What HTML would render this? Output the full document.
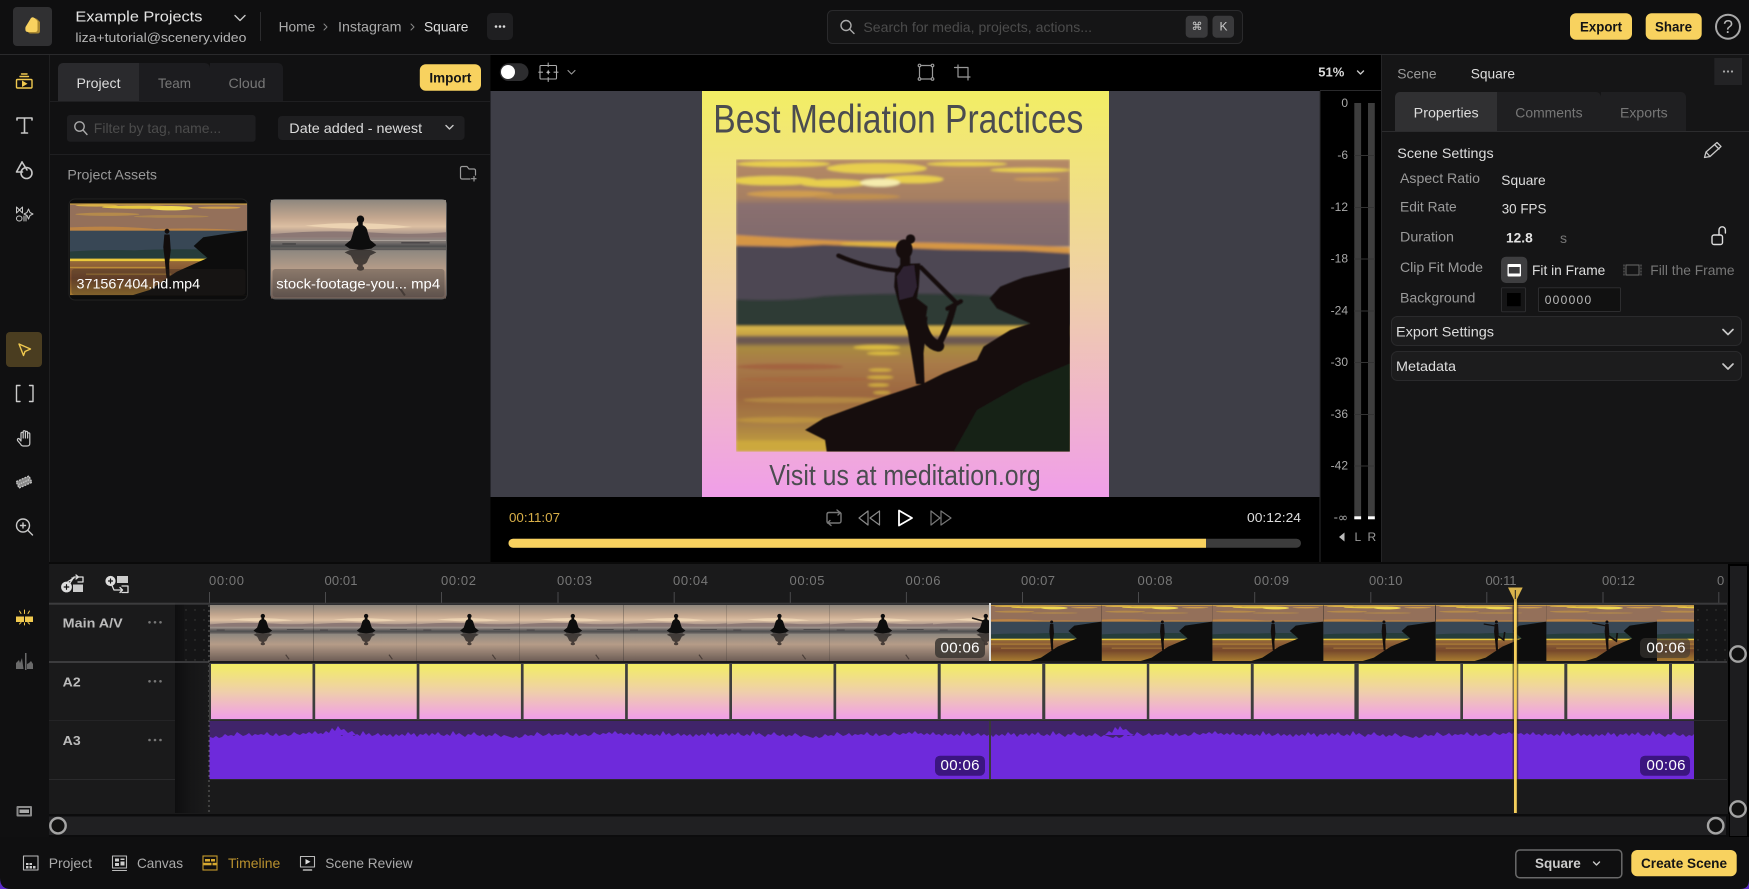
<!DOCTYPE html>
<html lang="en"><head><meta charset="utf-8"><title>Scenery</title>
<style>
html,body{margin:0;padding:0;background:#0f0f10;width:1749px;height:889px;overflow:hidden}
svg{display:block}
text{font-family:"Liberation Sans",sans-serif;dominant-baseline:central;font-size:14px;fill:#ddd}
.s13{font-size:13px}.s12{font-size:12px}.s15{font-size:15px}.b{font-weight:bold}
.g9{fill:#9a9a9a}.g7{fill:#777}.g5{fill:#4c4c4c}.ga{fill:#aaa}.gb{fill:#bbb}.d{fill:#141414}.w{fill:#fff}
.ic{fill:none;stroke:#c8c8c8;stroke-width:1.4;stroke-linecap:round;stroke-linejoin:round}
.y{stroke:#f0c94f}
</style></head><body>
<svg xmlns="http://www.w3.org/2000/svg" width="1749" height="889" viewBox="0 0 1749 889">
<defs>
<linearGradient id="gr" x1="0" y1="0" x2="0" y2="1"><stop offset="0" stop-color="#f2ee64"/><stop offset=".5" stop-color="#efcfaa"/><stop offset="1" stop-color="#f09ee9"/></linearGradient>
<linearGradient id="wat" x1="0" y1="0" x2="0" y2="1"><stop offset="0" stop-color="#d9b94a"/><stop offset=".07" stop-color="#c8a244"/><stop offset=".09" stop-color="#6f5a52"/><stop offset=".13" stop-color="#6a5650"/><stop offset=".17" stop-color="#a88a40"/><stop offset=".3" stop-color="#a87a48"/><stop offset=".55" stop-color="#9c6640"/><stop offset=".8" stop-color="#ab8244"/><stop offset="1" stop-color="#c9a63c"/></linearGradient>
<linearGradient id="sk" x1="0" y1="0" x2="0" y2="1"><stop offset="0" stop-color="#b58a66"/><stop offset=".45" stop-color="#a67f62"/><stop offset=".52" stop-color="#8a6f6f"/><stop offset="1" stop-color="#7f6a6c"/></linearGradient>
<linearGradient id="wat2" x1="0" y1="0" x2="0" y2="1"><stop offset="0" stop-color="#96683a"/><stop offset=".5" stop-color="#77492c"/><stop offset="1" stop-color="#a87c30"/></linearGradient>
<linearGradient id="bsky" x1="0" y1="0" x2="0" y2="1"><stop offset="0" stop-color="#8f877e"/><stop offset=".18" stop-color="#c4a78f"/><stop offset=".27" stop-color="#dcbfa2"/><stop offset=".37" stop-color="#9c8a84"/><stop offset=".43" stop-color="#77716e"/><stop offset=".47" stop-color="#4d4d4e"/><stop offset=".52" stop-color="#8f8880"/><stop offset=".7" stop-color="#b59c88"/><stop offset="1" stop-color="#6d5d56"/></linearGradient>
<linearGradient id="strip" x1="0" y1="0" x2="1" y2="0"><stop offset="0" stop-color="#0e0e0f"/><stop offset=".4" stop-color="#151516"/><stop offset="1" stop-color="#1a1a1b"/></linearGradient>
<filter id="bl" x="-2%" y="-2%" width="104%" height="104%"><feGaussianBlur stdDeviation="1.600"/></filter>
<filter id="blw" x="-5%" y="-5%" width="110%" height="110%"><feGaussianBlur stdDeviation="4"/></filter>
<filter id="bl2" x="-2%" y="-2%" width="104%" height="104%"><feGaussianBlur stdDeviation=".6"/></filter>
<pattern id="wave" patternUnits="userSpaceOnUse" x="210" y="721" width="300" height="58">
<rect width="300" height="58" fill="#40246a"/>
<path fill="#6e2adb" d="M0 16L3 17 6 15 9 17 12 16 15 13 18 15 21 14 24 15 27 11 30 13 33 15 36 14 39 12 42 15 45 13 48 14 51 13 54 14 57 11 60 14 63 15 66 12 69 15 72 14 75 13 78 15 81 14 84 11 87 13 90 14 93 12 96 13 99 11 102 13 105 10 108 13 111 12 114 14 117 12 120 14 123 11 126 14 129 13 132 15 135 12 138 14 141 13 144 15 147 13 150 15 153 10 156 14 159 12 162 15 165 14 168 12 171 15 174 13 177 15 180 13 183 16 186 13 189 15 192 13 195 15 198 11 201 14 204 12 207 16 210 13 213 14 216 12 219 15 222 12 225 14 228 11 231 14 234 15 237 13 240 15 243 10 246 14 249 12 252 14 255 16 258 13 261 14 264 11 267 14 270 15 273 13 276 16 279 14 282 15 285 12 288 14 291 16 294 14 297 15 300 16V58H0Z"/>
</pattern>
<pattern id="dots" patternUnits="userSpaceOnUse" x="184" y="608" width="9" height="10"><rect width="9" height="10" fill="#151516"/><circle cx="2" cy="2" r=".7" fill="#3c3c3c"/></pattern>

<symbol id="wide" viewBox="0 0 332 168" preserveAspectRatio="none"><g filter="url(#bl2)">
<rect width="332" height="52" fill="#94705a"/>
<rect y="0" width="332" height="2.500" fill="#c99e42"/>
<ellipse cx="130" cy="7" rx="70" ry="3" fill="#e8c840"/><ellipse cx="190" cy="9" rx="40" ry="4" fill="#f0d850"/><ellipse cx="50" cy="4" rx="40" ry="2" fill="#d8b048"/><ellipse cx="280" cy="8" rx="40" ry="2" fill="#d0a048"/>
<ellipse cx="70" cy="20" rx="60" ry="3" fill="#b58a4c"/><ellipse cx="190" cy="24" rx="70" ry="2.500" fill="#ab8450"/>
<path fill="#bc8444" d="M0 44Q80 40 160 47 250 44 332 50V53H0Z"/>
<rect y="50" width="332" height="52" fill="#394655"/>
<path d="M0 88Q60 84 120 86 200 82 332 86V102H0Z" fill="#253c3b"/>
<rect y="101" width="332" height="5" fill="#ecc93a"/>
<rect y="106" width="332" height="62" fill="url(#wat2)"/>
<rect y="116" width="180" height="2.500" fill="#d9aa3c" opacity=".6"/><rect x="30" y="128" width="160" height="3" fill="#d9aa3c" opacity=".45"/>
<path fill="#09100e" d="M117 168L150 158 200 125 258 100 232 78 250 62 332 50V168Z"/>
</g></symbol>

<g id="pStand"><g fill="#120d0c"><circle cx="182" cy="51" r="4.500"/><path d="M177 57L187 57 189 85 186 110 187 136 181 136 178 105 175 80Z"/></g></g>

<g id="med"><circle cx="158" cy="33" r="6.500"/><path d="M154 38H162V43C168 45 170 50 171 56L175 68 186 77 177 83 158 85 139 83 130 77 141 68 145 56C146 50 148 45 154 43Z"/></g>

<symbol id="beach" viewBox="0 0 309 168" preserveAspectRatio="none"><g filter="url(#bl2)">
<rect width="309" height="168" fill="url(#bsky)"/>
<path fill="#ecd3b2" d="M60 44Q150 34 250 46 160 54 60 44Z"/>
<path fill="#8c7874" d="M0 58Q100 50 190 56 250 60 309 55V64H0Z"/>
<rect y="68" width="309" height="1.500" fill="#d8d0c6" opacity=".6"/><rect y="83" width="309" height="2" fill="#35353a" opacity=".5"/>
<path fill="#3e3a3c" d="M20 74h24v2H20zM230 72h50v2h-50z"/>
<use href="#med" fill="#0d0b0b"/>
<g transform="matrix(1 0 0 -.62 0 137)" opacity=".75"><use href="#med" fill="#25201f"/></g>
<path fill="#4a3e38" d="M228 148l10 14-3 2-10-14Z"/>
</g></symbol>

<symbol id="yoga" viewBox="138 208 1001 877" preserveAspectRatio="none">
<g filter="url(#blw)">
<rect x="138" y="208" width="1001" height="262" fill="url(#sk)"/>
<g fill="#e8cf4e"><ellipse cx="280" cy="222" rx="140" ry="9"/><ellipse cx="560" cy="235" rx="150" ry="16"/><ellipse cx="830" cy="222" rx="120" ry="7"/><ellipse cx="1020" cy="240" rx="120" ry="7"/><ellipse cx="250" cy="272" rx="130" ry="14"/><ellipse cx="430" cy="280" rx="100" ry="12"/><ellipse cx="670" cy="268" rx="90" ry="12"/></g>
<ellipse cx="570" cy="278" rx="60" ry="12" fill="#f6ecae"/>
<ellipse cx="300" cy="312" rx="130" ry="10" fill="#cf9c50"/><ellipse cx="500" cy="320" rx="130" ry="9" fill="#c09050"/>
<ellipse cx="1040" cy="268" rx="70" ry="6" fill="#c79858"/>
<path fill="#d59645" d="M138 435Q400 452 560 456 800 458 1139 472V492Q900 488 700 480 400 472 138 466Z"/>
<ellipse cx="560" cy="462" rx="110" ry="7" fill="#e2b540"/>
<path fill="#4e4753" d="M138 468L300 470 400 464 560 470 760 478 1000 482 1139 490V640H138Z"/>
<path fill="#2e3b36" d="M138 628Q300 635 400 618 600 608 780 612 900 615 1139 630V708H138Z"/>
<rect x="138" y="708" width="1001" height="377" fill="url(#wat)"/>
<g fill="#dcbc40"><ellipse cx="560" cy="772" rx="70" ry="7"/><ellipse cx="580" cy="790" rx="50" ry="5"/><ellipse cx="570" cy="840" rx="35" ry="5" opacity=".8"/><ellipse cx="570" cy="862" rx="40" ry="5" opacity=".8"/><ellipse cx="565" cy="885" rx="32" ry="5" opacity=".8"/><ellipse cx="575" cy="908" rx="26" ry="5" opacity=".7"/></g>
<ellipse cx="300" cy="830" rx="160" ry="9" fill="#a0573a" opacity=".6"/><ellipse cx="350" cy="868" rx="200" ry="7" fill="#a85f3a" opacity=".5"/><ellipse cx="380" cy="930" rx="220" ry="9" fill="#c09a44" opacity=".6"/><ellipse cx="280" cy="990" rx="140" ry="9" fill="#c8a040" opacity=".6"/>
<rect x="138" y="1052" width="270" height="33" fill="#cca83e"/>
</g>
<g filter="url(#bl)">
<path fill="#15110e" d="M345 1020L400 985 550 930 640 900 700 880 760 850 860 810 880 770 960 720 1020 700 920 655 898 625 930 590 1000 562 1139 532V1085H410L405 1050Z"/>
<path fill="#18231a" d="M790 1085L860 960 1000 880 1139 820V1085Z" opacity=".85"/>
<g fill="#17110f">
<ellipse cx="642" cy="478" rx="25" ry="30"/><circle cx="661" cy="447" r="14"/>
<path d="M630 500H660V530H630Z"/>
<path d="M615 545L632 522 690 520 686 590 680 625 712 650 706 690 650 720 625 640 612 590Z"/>
<path d="M648 700L712 680 700 790 703 882 678 882 665 800Z"/>
</g>
<path fill="#2d2430" d="M620 560L640 530 672 525 680 590 668 620 628 630Z"/>
<g fill="none" stroke="#17110f" stroke-linecap="round">
<path d="M625 542Q530 535 445 497" stroke-width="13"/>
<path d="M692 532Q730 570 800 640" stroke-width="13"/>
<path d="M690 685Q705 760 745 768" stroke-width="34"/>
<path d="M745 765Q775 710 790 650" stroke-width="19"/>
<path d="M772 656L812 634" stroke-width="13"/>
</g></g>
</symbol>
</defs>

<!-- base -->
<rect width="1749" height="889" fill="#0f0f10"/>
<path d="M0 878Q0 889 11 889H0Z" fill="#5b2bc9"/><path d="M1749 880Q1749 889 1740 889H1749Z" fill="#5b2bc9"/>
<rect y="54" width="1749" height="1" fill="#2a2a2c"/>

<!-- top bar -->
<rect x="13" y="7" width="39" height="39" rx="4" fill="#303032"/>
<path d="M28 28L33 19Q35 17.500 37 19L40 22V31Q40 33.500 37.500 33.500H30Q27 33 28 28Z" fill="#a98832"/>
<path d="M25.500 27L31 18Q32.500 16.500 34.500 18L37.500 21V29.500Q37.500 32 35 32H28Q24.500 32 25.500 27Z" fill="#f8d25f"/>
<text x="75.400" y="17" class="s15" textLength="127" lengthAdjust="spacingAndGlyphs" style="fill:#e4e4e4">Example Projects</text>
<text x="75.400" y="37.700" class="s13" textLength="171" lengthAdjust="spacingAndGlyphs" style="fill:#b5b5b5">liza+tutorial@scenery.video</text>
<path class="ic" d="M235 15.500L240 20.500 245 15.500"/>
<rect x="260" y="12" width="1" height="29" fill="#2c2c2e"/>
<text x="278.600" y="26.700" textLength="36.700" lengthAdjust="spacingAndGlyphs" class="ga">Home</text>
<path class="ic" style="stroke:#888;stroke-width:1" d="M324 24L327 27 324 30"/>
<text x="338" y="26.700" textLength="63.500" lengthAdjust="spacingAndGlyphs" class="ga">Instagram</text>
<path class="ic" style="stroke:#888;stroke-width:1" d="M411 24L414 27 411 30"/>
<text x="424" y="26.700" textLength="44.400" lengthAdjust="spacingAndGlyphs">Square</text>
<rect x="487" y="13" width="26" height="27" rx="5" fill="#1f1f21"/>
<g fill="#ddd"><circle cx="496" cy="26.500" r="1.300"/><circle cx="500" cy="26.500" r="1.300"/><circle cx="504" cy="26.500" r="1.300"/></g>

<rect x="827.500" y="10.500" width="415" height="33" rx="5" fill="#151516" stroke="#2a2a2c"/>
<circle cx="846" cy="25.500" r="5" class="ic" style="stroke:#aaa"/><path class="ic" style="stroke:#aaa" d="M849.500 29L854 33.500"/>
<text x="863.400" y="27" textLength="228.600" lengthAdjust="spacingAndGlyphs" class="g5">Search for media, projects, actions...</text>
<rect x="1185.700" y="15.700" width="22" height="22" rx="4" fill="#3a3a3c"/><rect x="1212.500" y="15.700" width="21.500" height="22" rx="4" fill="#3a3a3c"/>
<text x="1191.500" y="26.700" class="s12" style="font-family:'DejaVu Sans',sans-serif;font-size:11px;fill:#ccc">⌘</text>
<text x="1219.500" y="26.700" class="s12" style="fill:#ccc">K</text>

<rect x="1570" y="13.300" width="62" height="26.400" rx="6" fill="#f8d25f"/>
<text x="1580" y="26.700" textLength="42" lengthAdjust="spacingAndGlyphs" class="b d">Export</text>
<rect x="1645.700" y="13.300" width="56" height="26.400" rx="6" fill="#f8d25f"/>
<text x="1655" y="26.700" textLength="37" lengthAdjust="spacingAndGlyphs" class="b d">Share</text>
<circle cx="1728" cy="26.700" r="12" fill="none" stroke="#a8a8a8" stroke-width="2"/>
<text x="1728" y="27" text-anchor="middle" style="font-size:18px;fill:#b8b8b8">?</text>

<!-- left rail -->
<rect y="55" width="49" height="782" fill="#101011"/>
<rect x="49" y="55" width="1" height="782" fill="#1f1f20"/>
<g class="ic y"><rect x="16.500" y="79.500" width="15.500" height="8.500" rx="1"/><path d="M20 76.500H28.500M21.500 74H27"/></g><path d="M22 80.500L27.500 83.800 22 87Z" fill="#f0c94f"/>
<g class="ic" style="stroke-width:1.600"><path d="M17 120V118H32V120M24.500 118V133M21.500 133H27.500"/></g>
<g class="ic" style="stroke-width:1.600"><path d="M22 162L16.500 172H22.500"/><path d="M22 162L27 170"/><circle cx="26.500" cy="173" r="5.500"/></g>
<g class="ic" style="stroke-width:1"><path d="M16.500 207V213L22.500 207V213ZM16.500 207L19.500 210"/><rect x="16.500" y="216" width="5.500" height="5" rx="2.500"/><path d="M24 216V221M26 216V221"/><path d="M28.500 209L30 212.500 33 214 30 215.500 28.500 219 27 215.500 24 214 27 212.500Z"/></g>
<rect x="6" y="332" width="36" height="35" rx="4" fill="#4a3d20"/>
<path class="ic y" d="M19 344L30.500 349 25 351.500 23.500 355.500Z"/>
<g class="ic" style="stroke:#ccc"><path d="M20 385.500H16.500V401.500H20M29.500 385.500H33V401.500H29.500"/></g>
<g class="ic" style="stroke-width:1.200"><path d="M21 441V433.500a1.100 1.100 0 0 1 2.200 0V438M23.200 438V431.800a1.100 1.100 0 0 1 2.200 0V438M25.400 438V432.500a1.100 1.100 0 0 1 2.200 0V438M27.600 438V434a1.100 1.100 0 0 1 2.200 0V443Q30 446 27 446H23Q21.500 446 20.500 444L17.500 440.500Q17 438.500 19 438.500L21 441"/></g>
<g transform="rotate(-24 24 482)"><rect x="17" y="478.500" width="14" height="7" fill="#8a8a8a"/><rect x="17" y="478.500" width="14" height="7" fill="none" stroke="#c8c8c8" stroke-width="1.300" stroke-dasharray="2 1"/><path d="M18 482H30" stroke="#d8d8d8" stroke-width="1" stroke-dasharray="1.500 1"/></g>
<g class="ic" style="stroke-width:1.400"><circle cx="23" cy="525.500" r="6.500"/><path d="M28 530.500L32.500 535M20.500 525.500H25.500M23 523V528"/></g>

<path d="M16 616.500H33V622H16Z" fill="#f0c94f"/><path class="ic y" style="stroke-width:1" d="M24.500 610V613.500M19.500 611L21 613.500M29.500 611L28 613.500M24.500 625V622.500M19.500 624L21 622.500M29.500 624L28 622.500"/><rect x="24" y="616" width="1" height="6.500" fill="#101011"/>
<path d="M16 669V663L19 660 20 663 22 658 23.500 669ZM27 669V664L29 663 31 661 33 664V669Z" fill="#6a6a6a"/><rect x="25" y="653" width="1.500" height="17" fill="#6a6a6a"/>
<rect x="16.500" y="806" width="15.500" height="10.500" rx="1" fill="#8a8a8a"/><rect x="18.500" y="808" width="11.500" height="6.500" fill="#101011"/><rect x="19.500" y="809.500" width="9.500" height="3.500" fill="#aaa"/>

<!-- project panel -->
<rect x="50" y="55" width="440" height="508" fill="#111112"/>
<path d="M58 102V68a5 5 0 0 1 5-5H139V102Z" fill="#2a2a2d"/>
<path d="M139 102V63H205a5 5 0 0 1 5 5V102Z" fill="#1c1c1f"/>
<path d="M210 102V63H278a5 5 0 0 1 5 5V102Z" fill="#1c1c1f"/>
<rect x="50" y="101" width="440" height="1" fill="#1f1f21"/>
<text x="76.500" y="83" textLength="44" lengthAdjust="spacingAndGlyphs">Project</text>
<text x="158" y="83" textLength="33" lengthAdjust="spacingAndGlyphs" class="g7">Team</text>
<text x="228.500" y="83" textLength="37" lengthAdjust="spacingAndGlyphs" class="g7">Cloud</text>
<rect x="419.800" y="64.300" width="61.200" height="26.400" rx="6" fill="#f8d25f"/>
<text x="429.400" y="77.500" textLength="42" lengthAdjust="spacingAndGlyphs" class="b d">Import</text>
<rect x="67" y="115" width="188.600" height="26.700" rx="3" fill="#1e1e20"/>
<circle cx="79.500" cy="126.500" r="4.700" class="ic" style="stroke:#aaa"/><path class="ic" style="stroke:#aaa" d="M83 130L87 134.500"/>
<text x="93.800" y="128" textLength="127.400" lengthAdjust="spacingAndGlyphs" class="g5">Filter by tag, name...</text>
<rect x="278" y="116" width="186.600" height="24" rx="4" fill="#1e1e20"/>
<text x="289.300" y="128" textLength="132.800" lengthAdjust="spacingAndGlyphs">Date added - newest</text>
<path class="ic" d="M446 125.500L449.500 129 453 125.500"/>
<rect x="50" y="154" width="440" height="1" fill="#1f1f21"/>
<text x="67.400" y="174.500" textLength="89.600" lengthAdjust="spacingAndGlyphs" class="g9">Project Assets</text>
<path class="ic" style="stroke:#999;stroke-width:1.200" d="M470 179H462a1.500 1.500 0 0 1-1.500-1.500V168a1.500 1.500 0 0 1 1.500-1.500H467L469 169H474a1.500 1.500 0 0 1 1.500 1.500V175M474 176.500V181M471.500 178.700H476"/>

<rect x="69" y="199" width="178.500" height="101" rx="6" fill="#0c0c0c" stroke="#222"/>
<svg x="70" y="203.300" width="177" height="92" overflow="hidden"><use href="#wide" width="177" height="92"/><use href="#pStand" transform="scale(.533,.548)"/></svg>
<rect x="71.500" y="269" width="174" height="26" rx="3" fill="#2a2622" opacity=".3"/>
<text x="76.500" y="283.500" textLength="123.600" lengthAdjust="spacingAndGlyphs" class="w">371567404.hd.mp4</text>
<rect x="270.500" y="199.500" width="176" height="99.500" rx="5" fill="none" stroke="#555" stroke-width="1"/>
<svg x="271" y="200" width="175" height="98.500"><use href="#beach" width="175" height="98.500"/></svg>
<rect x="272.500" y="269" width="172" height="28" rx="3" fill="#3e3a36" opacity=".35"/>
<text x="276.300" y="283.500" textLength="163.800" lengthAdjust="spacingAndGlyphs" class="w">stock-footage-you... mp4</text>

<!-- preview -->
<rect x="490.500" y="55" width="830" height="36" fill="#000"/>
<rect x="490.500" y="91" width="829" height="406" fill="#3e3e47"/>
<rect x="490.500" y="497" width="829" height="66" fill="#000"/>
<rect x="499.800" y="63.300" width="28.700" height="17.700" rx="8.800" fill="#2d2d2f"/><circle cx="508" cy="72" r="7" fill="#fff"/>
<g class="ic" style="stroke:#aaa;stroke-width:1.100"><rect x="540" y="65.500" width="16.500" height="13.500" rx="1"/><path d="M548.200 63V66.500M548.200 77.500V81.500M538.800 72.200H542.500M554 72.200H558"/></g><path d="M548.200 69.500L549 71.500 550.500 72.200 549 73 548.200 75 547.400 73 546 72.200 547.400 71.500Z" fill="#bbb"/>
<path class="ic" style="stroke:#999;stroke-width:1.100" d="M568 70.500L571.500 74 575 70.500"/>
<g class="ic" style="stroke:#999;stroke-width:1.200"><rect x="919.500" y="65.500" width="13" height="13.500"/><g fill="#000"><circle cx="919.500" cy="65.500" r="1.300"/><circle cx="932.500" cy="65.500" r="1.300"/><circle cx="919.500" cy="79" r="1.300"/><circle cx="932.500" cy="79" r="1.300"/></g></g>
<path class="ic" style="stroke:#999;stroke-width:1.200" d="M954.500 67.500H968V80M958 65V77H970"/>

<rect x="702" y="91" width="407" height="406" fill="url(#gr)"/>
<text x="713.300" y="119.500" textLength="370" lengthAdjust="spacingAndGlyphs" style="font-size:40px;fill:#4b4c50">Best Mediation Practices</text>
<use href="#yoga" x="736" y="159.300" width="334" height="292.400"/>
<text x="769.300" y="476" textLength="271.400" lengthAdjust="spacingAndGlyphs" style="font-size:29px;fill:#4b4c50">Visit us at meditation.org</text>

<text x="509" y="517.700" textLength="51" lengthAdjust="spacingAndGlyphs" class="s13" style="fill:#d8af48">00:11:07</text>
<text x="1247" y="517.700" textLength="54" lengthAdjust="spacingAndGlyphs" class="s13">00:12:24</text>
<g class="ic" style="stroke:#777"><path d="M827 522V514.500Q827 512.500 829 512.500H840L837 510M840.500 512.500L838 515M841 513.500V521Q841 523 839 523H828L831 525.500M827.500 523L830 520.500"/></g>
<path class="ic" style="stroke:#8a8a8a;stroke-width:1.200" d="M868 511L859 518 868 525ZM879.500 511L870 518 879.500 525Z"/>
<path class="ic" style="stroke:#fff;stroke-width:1.800" d="M899 510.500L912 518 899 525.500Z"/>
<path class="ic" style="stroke:#777;stroke-width:1.200" d="M931 511L940 518 931 525ZM941 511L951 518 941 525Z"/>
<rect x="508.400" y="538.700" width="792.600" height="9" rx="4.500" fill="#3c3c3c"/>
<path d="M1206 538.700H513a4.500 4.500 0 0 0 0 9H1206Z" fill="#f9d25f"/>

<!-- meter -->
<rect x="1320" y="55" width="61" height="508" fill="#000"/>
<rect x="1319.500" y="91" width="1" height="472" fill="#2a2a2c"/>
<rect x="1320" y="90" width="61" height="1" fill="#2a2a2c"/>
<text x="1318.300" y="72" class="s13 b">51%</text>
<path class="ic" d="M1357.500 71L1360.500 74 1363.500 71"/>
<rect x="1354.300" y="103" width="6.800" height="416" fill="#3d3d3d"/><rect x="1368" y="103" width="6.800" height="416" fill="#3d3d3d"/>
<g fill="#333"><rect x="1354" y="155" width="21" height="1"/><rect x="1354" y="207" width="21" height="1"/><rect x="1354" y="258.500" width="21" height="1"/><rect x="1354" y="310.500" width="21" height="1"/><rect x="1354" y="362" width="21" height="1"/><rect x="1354" y="414" width="21" height="1"/><rect x="1354" y="465.500" width="21" height="1"/></g>
<rect x="1354.300" y="516.300" width="6.800" height="3" fill="#fff"/><rect x="1368" y="516.300" width="6.800" height="3" fill="#fff"/>
<text x="1348" y="103" text-anchor="end" class="s12 ga">0</text>
<text x="1348" y="155" text-anchor="end" class="s12 ga">-6</text>
<text x="1348" y="207" text-anchor="end" class="s12 ga">-12</text>
<text x="1348" y="258.700" text-anchor="end" class="s12 ga">-18</text>
<text x="1348" y="310.700" text-anchor="end" class="s12 ga">-24</text>
<text x="1348" y="362" text-anchor="end" class="s12 ga">-30</text>
<text x="1348" y="414" text-anchor="end" class="s12 ga">-36</text>
<text x="1348" y="465.700" text-anchor="end" class="s12 ga">-42</text>
<text x="1348" y="517.700" text-anchor="end" class="ga" style="font-family:'DejaVu Sans',sans-serif;font-size:12px">-∞</text>
<path d="M1344.500 532.500V541.500L1339 537Z" fill="#bbb"/>
<text x="1354.500" y="537" class="s12 g9">L</text><text x="1367.500" y="537" class="s12 g9">R</text>

<!-- right panel -->
<rect x="1381" y="55" width="368" height="508" fill="#151516"/>
<rect x="1381" y="55" width="1" height="508" fill="#242426"/>
<text x="1397.300" y="73.300" textLength="39.300" lengthAdjust="spacingAndGlyphs" class="g9">Scene</text>
<text x="1470.700" y="73.300" textLength="44.300" lengthAdjust="spacingAndGlyphs">Square</text>
<rect x="1714.300" y="58" width="27.700" height="27" fill="#232325"/>
<g fill="#aaa"><circle cx="1724" cy="71.500" r="1.100"/><circle cx="1728" cy="71.500" r="1.100"/><circle cx="1732" cy="71.500" r="1.100"/></g>
<path d="M1395 131V97a5 5 0 0 1 5-5H1497V131Z" fill="#303032"/>
<path d="M1497 131V92H1596a5 5 0 0 1 5 5V131Z" fill="#1f1f21"/>
<path d="M1601 131V92H1681a5 5 0 0 1 5 5V131Z" fill="#1f1f21"/>
<rect x="1382" y="131" width="367" height="1" fill="#2c2c2e"/>
<text x="1413.700" y="112.300" textLength="65" lengthAdjust="spacingAndGlyphs">Properties</text>
<text x="1515.300" y="112.300" textLength="67.300" lengthAdjust="spacingAndGlyphs" class="g7">Comments</text>
<text x="1620" y="112.300" textLength="47.700" lengthAdjust="spacingAndGlyphs" class="g7">Exports</text>
<text x="1397.300" y="153" textLength="96.300" lengthAdjust="spacingAndGlyphs">Scene Settings</text>
<path class="ic" style="stroke-width:1.300" d="M1704.500 157.500L1706 152 1717 142.500 1721 146.500 1710 156.500ZM1714.500 144.500L1719 149M1706 152L1710 156.500"/>
<text x="1400" y="178" textLength="80" lengthAdjust="spacingAndGlyphs" class="g9">Aspect Ratio</text>
<text x="1400" y="206.500" textLength="56.700" lengthAdjust="spacingAndGlyphs" class="g9">Edit Rate</text>
<text x="1400" y="236.700" textLength="54" lengthAdjust="spacingAndGlyphs" class="g9">Duration</text>
<text x="1400" y="267" textLength="83" lengthAdjust="spacingAndGlyphs" class="g9">Clip Fit Mode</text>
<text x="1400" y="297.500" textLength="75.300" lengthAdjust="spacingAndGlyphs" class="g9">Background</text>
<text x="1501.300" y="180" textLength="44.300" lengthAdjust="spacingAndGlyphs">Square</text>
<text x="1501.700" y="208.700" textLength="44.700" lengthAdjust="spacingAndGlyphs">30 FPS</text>
<text x="1506" y="237.300" textLength="26.700" lengthAdjust="spacingAndGlyphs" class="b" style="fill:#e4e4e4">12.8</text>
<text x="1560" y="238" class="g7">s</text>
<g class="ic" style="stroke:#ddd"><rect x="1712" y="235" width="10.500" height="9.500" rx="2"/><path d="M1719 235V230a3.200 3.200 0 0 1 6.400 0V233"/></g>
<rect x="1501" y="256.700" width="26.300" height="26.300" rx="5" fill="#3e3e40"/>
<rect x="1507.500" y="264" width="13.500" height="12.500" rx="1" fill="#fff"/><rect x="1508.800" y="267" width="10.900" height="6.500" fill="#3a3a3c"/>
<text x="1532" y="270" textLength="73.300" lengthAdjust="spacingAndGlyphs">Fit in Frame</text>
<g fill="none" stroke="#6a6a6a"><rect x="1626" y="265" width="13" height="10"/><path d="M1624 264.500V276M1641 264.500V276" stroke-dasharray="2 1"/></g>
<text x="1650.300" y="270" textLength="84.300" lengthAdjust="spacingAndGlyphs" class="g7">Fill the Frame</text>
<rect x="1501.500" y="287.800" width="24" height="24" rx="1" fill="none" stroke="#2d2d2f"/>
<rect x="1507" y="293" width="13.700" height="13.200" fill="#000"/>
<rect x="1538.500" y="287.800" width="82" height="23.700" rx="1" fill="#111" stroke="#2d2d2f"/>
<text x="1544.700" y="300" textLength="46.500" class="s12 gb">000000</text>
<rect x="1391.500" y="316.500" width="350" height="29" rx="6" fill="#1c1c1d" stroke="#2a2a2c"/>
<text x="1396" y="331.500" textLength="98" lengthAdjust="spacingAndGlyphs">Export Settings</text>
<path class="ic" style="stroke-width:1.700" d="M1723 329.500L1728 334.500 1733 329.500"/>
<rect x="1391.500" y="351.500" width="350" height="29" rx="6" fill="#1c1c1d" stroke="#2a2a2c"/>
<text x="1396" y="366" textLength="60" lengthAdjust="spacingAndGlyphs">Metadata</text>
<path class="ic" style="stroke-width:1.700" d="M1723 364L1728 369 1733 364"/>

<!-- timeline -->
<rect x="49" y="562" width="1700" height="2.500" fill="#0a0a0a"/>
<rect x="49" y="564" width="1679" height="252" fill="#1a1a1b"/>
<rect x="1728" y="564" width="21" height="273" fill="#000"/>
<rect x="1730" y="566" width="17" height="270" fill="#1d1d1f"/>
<g class="ic" style="stroke-width:1.300;stroke:#ddd">
<circle cx="66.500" cy="587" r="4.800" fill="#ddd" stroke-width="1.200"/><path d="M64.200 587H68.800M66.500 584.700V589.300" stroke="#111" style="stroke:#111" stroke-width="1.200"/>
<path d="M68 581.500L74 578H72M76 575L78.500 577 76 579M70 583L74 577H83V582H78"/>
<rect x="73" y="584.500" width="10" height="7.500" fill="#ccc" stroke="none"/>
<circle cx="110.500" cy="581" r="4.500" fill="#ddd" stroke-width="1.200"/><path d="M108.500 581H112.500M110.500 579V583" style="stroke:#111" stroke-width="1.200"/>
<rect x="117" y="576" width="11" height="7" fill="#ccc" stroke="none"/>
<path d="M112 585.500L114 590H122M120 587.500L122.500 590 120 592.500M122 586H128V592.500H122"/>
</g>
<g fill="#4a4a4c"><rect x="209" y="592" width="1" height="11"/><rect x="325" y="592" width="1" height="11"/><rect x="441" y="592" width="1" height="11"/><rect x="557.500" y="592" width="1" height="11"/><rect x="673.700" y="592" width="1" height="11"/><rect x="789.800" y="592" width="1" height="11"/><rect x="905.900" y="592" width="1" height="11"/><rect x="1022" y="592" width="1" height="11"/><rect x="1138" y="592" width="1" height="11"/><rect x="1254.200" y="592" width="1" height="11"/><rect x="1370.300" y="592" width="1" height="11"/><rect x="1486.300" y="592" width="1" height="11"/><rect x="1602.500" y="592" width="1" height="11"/><rect x="1718.300" y="592" width="1" height="11"/></g>
<text x="209" y="580.700" textLength="35" class="s13 g7">00:00</text>
<text x="324.500" y="580.700" textLength="33" class="s13 g7">00:01</text>
<text x="441" y="580.700" textLength="35" class="s13 g7">00:02</text>
<text x="557" y="580.700" textLength="35" class="s13 g7">00:03</text>
<text x="673" y="580.700" textLength="35" class="s13 g7">00:04</text>
<text x="789.500" y="580.700" textLength="35" class="s13 g7">00:05</text>
<text x="905.500" y="580.700" textLength="35" class="s13 g7">00:06</text>
<text x="1021" y="580.700" textLength="34" class="s13 g7">00:07</text>
<text x="1137.500" y="580.700" textLength="35" class="s13 g7">00:08</text>
<text x="1254" y="580.700" textLength="35" class="s13 g7">00:09</text>
<text x="1369" y="580.700" textLength="33.500" class="s13 g7">00:10</text>
<text x="1485.500" y="580.700" textLength="31" class="s13 g7">00:11</text>
<text x="1602" y="580.700" textLength="33" class="s13 g7">00:12</text>
<text x="1717" y="580.700" class="s13 g7">0</text>

<rect x="49" y="602.700" width="126" height="2" fill="#3c3c3e"/><rect x="49" y="661" width="126" height="2" fill="#3c3c3e"/>
<rect x="49" y="720" width="126" height="1" fill="#242426"/><rect x="49" y="779" width="126" height="1" fill="#2a2a2c"/>
<rect x="175" y="603" width="34" height="210" fill="url(#strip)"/>
<rect x="184" y="605" width="25" height="56" fill="url(#dots)"/>
<rect x="175" y="602.700" width="1552" height="2" fill="#39393b"/><rect x="175" y="661" width="34" height="2" fill="#39393b"/>
<rect x="1694" y="605" width="33" height="56" fill="url(#dots)"/>
<rect x="1694" y="661" width="33" height="2" fill="#39393b"/>
<rect x="1694" y="720" width="33" height="1" fill="#2a2a2c"/><rect x="1694" y="779" width="33" height="1" fill="#2a2a2c"/>
<rect x="210" y="779" width="1484" height="1" fill="#2a2a2c"/>
<path d="M209 605V813" stroke="#666" stroke-width="1" stroke-dasharray="2 3"/>
<text x="62.700" y="623" textLength="60" lengthAdjust="spacingAndGlyphs" class="s13 b gb">Main A/V</text>
<text x="62.700" y="682" textLength="18" lengthAdjust="spacingAndGlyphs" class="s13 b gb">A2</text>
<text x="62.700" y="740.700" textLength="18" lengthAdjust="spacingAndGlyphs" class="s13 b gb">A3</text>
<g fill="#777"><circle cx="149.500" cy="622.300" r="1.300"/><circle cx="155" cy="622.300" r="1.300"/><circle cx="160.500" cy="622.300" r="1.300"/><circle cx="149.500" cy="681.300" r="1.300"/><circle cx="155" cy="681.300" r="1.300"/><circle cx="160.500" cy="681.300" r="1.300"/><circle cx="149.500" cy="740" r="1.300"/><circle cx="155" cy="740" r="1.300"/><circle cx="160.500" cy="740" r="1.300"/></g>

<!-- filmstrip clip 1 -->
<use href="#beach" x="210" y="605" width="103.300" height="56"/>
<use href="#beach" x="313.300" y="605" width="103.300" height="56"/>
<use href="#beach" x="416.600" y="605" width="103.300" height="56"/>
<use href="#beach" x="520" y="605" width="103.300" height="56"/>
<use href="#beach" x="623.300" y="605" width="103.300" height="56"/>
<use href="#beach" x="726.600" y="605" width="103.300" height="56"/>
<use href="#beach" x="830" y="605" width="103.300" height="56"/>
<svg x="933" y="605" width="56" height="56"><use href="#beach" width="103.300" height="56"/></svg>
<path d="M972 618L983 621" stroke="#15100e" stroke-width="1.500"/>
<rect x="989" y="603" width="2" height="58" fill="#ddd"/>
<!-- filmstrip clip 2 -->
<svg x="991" y="605" width="703" height="56">
<g><use href="#wide" width="110.700" height="56"/><use href="#pStand" transform="scale(.3333,.3333)"/></g>
<g transform="translate(110.700 0)"><use href="#wide" width="110.700" height="56"/><use href="#pStand" transform="scale(.3333,.3333)"/></g>
<g transform="translate(221.400 0)"><use href="#wide" width="110.700" height="56"/><use href="#pStand" transform="scale(.3333,.3333)"/></g>
<g transform="translate(332.300 0)"><use href="#wide" width="112" height="56"/><use href="#pStand" transform="scale(.3333,.3333)"/></g>
<g transform="translate(444.700 0)"><use href="#wide" width="110.700" height="56"/><use href="#pStand" transform="scale(.3333,.3333)"/><path d="M60 21L48 19" stroke="#15100e" stroke-width="1.200"/><path d="M61 30L68 35 69 27" stroke="#15100e" stroke-width="1.600" fill="none"/></g>
<g transform="translate(555.300 0)"><use href="#wide" width="110.700" height="56"/><use href="#pStand" transform="scale(.3333,.3333)"/><path d="M60 21L46 18" stroke="#15100e" stroke-width="1.200"/><path d="M61 30L70 36 71 28" stroke="#15100e" stroke-width="1.800" fill="none"/></g>
<g transform="translate(666 0)"><use href="#wide" width="110.700" height="56"/></g>
</svg>
<!-- badges -->
<rect x="935" y="638" width="50" height="20" rx="5" fill="#3c3833" opacity=".88"/><text x="960" y="648" text-anchor="middle" class="w s15" textLength="39">00:06</text>
<rect x="1640" y="638" width="50" height="20" rx="5" fill="#3c3833" opacity=".6"/><text x="1666" y="648" text-anchor="middle" class="w s15" textLength="39">00:06</text>

<!-- A2 -->
<rect x="209" y="663" width="1485" height="57.500" fill="#3d3d3d"/>
<g fill="url(#gr)"><rect x="211" y="664" width="101.500" height="55"/><rect x="315.200" y="664" width="101.500" height="55"/><rect x="419.400" y="664" width="101.500" height="55"/><rect x="523.600" y="664" width="101.500" height="55"/><rect x="627.800" y="664" width="101.500" height="55"/><rect x="732" y="664" width="101.500" height="55"/><rect x="836.200" y="664" width="101.500" height="55"/><rect x="940.700" y="664" width="101.500" height="55"/><rect x="1045.300" y="664" width="101.500" height="55"/><rect x="1149.300" y="664" width="101.500" height="55"/><rect x="1253.700" y="664" width="100.700" height="55"/><rect x="1358.700" y="664" width="101.600" height="55"/><rect x="1463" y="664" width="101.300" height="55"/><rect x="1567.300" y="664" width="101.700" height="55"/><rect x="1672" y="664" width="22" height="55"/></g>

<!-- A3 -->
<rect x="209.500" y="721" width="779.500" height="58" fill="url(#wave)"/>
<rect x="989" y="721" width="2" height="58" fill="#3a3a3a"/>
<rect x="991" y="721" width="703" height="58" fill="url(#wave)"/>
<path fill="#6e2adb" d="M322 735L326 731 329 733 332 728 335 731 338 726 341 730 344 729 348 733 352 731 356 735ZM1105 735L1109 731 1112 733 1115 727 1118 730 1120 726 1123 730 1126 729 1130 733 1134 735Z"/>
<rect x="935" y="755.700" width="50" height="20" rx="5" fill="#3b1580"/><text x="960" y="765.700" text-anchor="middle" class="w s15" textLength="39">00:06</text>
<rect x="1640" y="755.700" width="50" height="20" rx="5" fill="#3b1580"/><text x="1666" y="765.700" text-anchor="middle" class="w s15" textLength="39">00:06</text>

<!-- scrollbars -->
<rect x="49" y="814" width="1680" height="23" fill="#0c0c0d"/>
<rect x="49" y="816.500" width="1677" height="18.500" fill="#202022"/>
<circle cx="58" cy="825.700" r="7.700" fill="#111" stroke="#a4a4a4" stroke-width="2.400"/>
<circle cx="1715.700" cy="825.700" r="7.700" fill="#111" stroke="#a4a4a4" stroke-width="2.400"/>
<circle cx="1738" cy="654" r="7.700" fill="#111" stroke="#a4a4a4" stroke-width="2.400"/>
<circle cx="1738" cy="809" r="7.700" fill="#111" stroke="#a4a4a4" stroke-width="2.400"/>

<!-- playhead -->
<rect x="1512.500" y="603" width="5.800" height="210" fill="#2a2418" opacity=".55"/>
<rect x="1514" y="598" width="2.800" height="215" fill="#f5cf5c"/>
<path d="M1508 587.500H1522.700L1515.300 602.500Z" fill="#d9b44c"/><rect x="1514.800" y="590" width="1" height="9" fill="#222"/>

<!-- bottom bar -->
<g class="ic" style="stroke:#bbb;stroke-width:1.100"><rect x="23.500" y="856" width="14.500" height="14"/></g>
<g fill="#ccc"><rect x="26" y="863" width="2.500" height="2"/><rect x="26" y="866" width="2.500" height="2.500"/><rect x="29.500" y="866" width="2.500" height="2.500"/><rect x="33" y="866" width="2.500" height="2.500"/><rect x="29.500" y="863" width="2.500" height="2"/></g>
<text x="48.700" y="863" textLength="43.300" lengthAdjust="spacingAndGlyphs" class="ga">Project</text>
<g class="ic" style="stroke:#bbb;stroke-width:1.100"><rect x="112.500" y="856" width="14" height="12"/><path d="M112.500 870.500H126.500"/></g>
<g fill="#ccc"><rect x="115" y="858.500" width="4" height="3"/><rect x="120.500" y="858.500" width="4" height="1.500"/><rect x="115" y="863" width="4" height="3"/><rect x="120.500" y="861.500" width="4" height="4"/></g>
<text x="137" y="863" textLength="46" lengthAdjust="spacingAndGlyphs" class="ga">Canvas</text>
<rect x="203" y="856" width="14" height="14" fill="none" stroke="#c59a2c" stroke-width="1.100"/>
<g fill="#d8aa30"><rect x="205" y="859" width="5" height="2.500"/><rect x="211" y="859" width="4" height="2.500"/><rect x="203.500" y="862.800" width="8" height="2.500"/><rect x="212.500" y="862.800" width="4" height="2.500"/></g>
<text x="228" y="863" textLength="52.300" lengthAdjust="spacingAndGlyphs" style="fill:#b8902e">Timeline</text>
<g class="ic" style="stroke:#bbb;stroke-width:1.100"><rect x="300.500" y="856.500" width="14" height="10.500"/><path d="M303.500 870H311.500" style="stroke-width:1.600"/></g>
<path d="M305.500 859L310.500 861.800 305.500 864.500Z" fill="#ddd"/>
<text x="325.300" y="863" textLength="87.300" lengthAdjust="spacingAndGlyphs" class="ga">Scene Review</text>
<rect x="1515.800" y="850" width="106" height="27.800" rx="4" fill="none" stroke="#6a6a6a" stroke-width="1.500"/>
<text x="1535" y="863" textLength="45.700" lengthAdjust="spacingAndGlyphs" class="b" style="fill:#ccc">Square</text>
<path class="ic" d="M1593.500 862L1596.500 865 1599.500 862"/>
<rect x="1631.300" y="850" width="105.400" height="26.300" rx="6" fill="#f8d25f"/>
<text x="1641" y="863" textLength="86" lengthAdjust="spacingAndGlyphs" class="b d">Create Scene</text>
</svg>
</body></html>
